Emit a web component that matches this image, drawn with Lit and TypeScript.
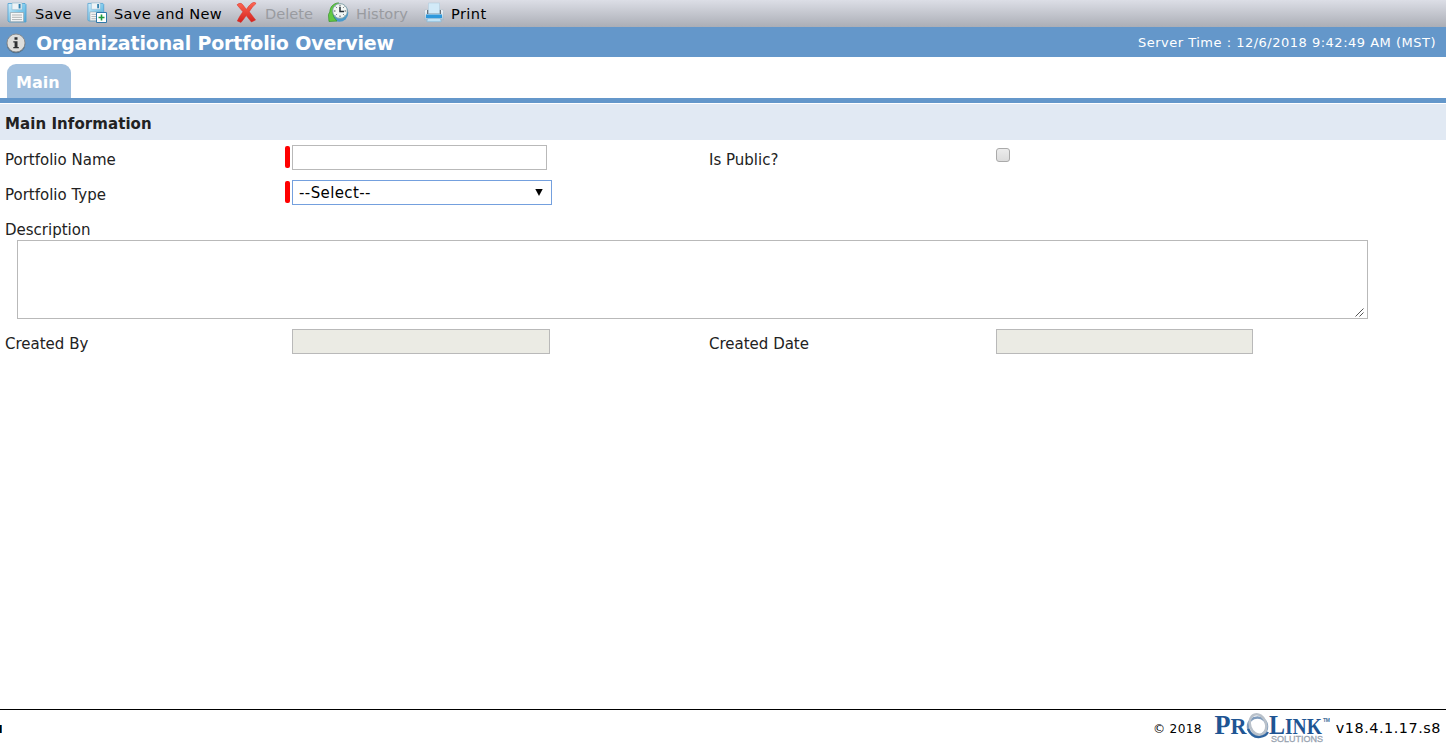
import { LitElement, html, css, svg } from "lit";
import { customElement } from "lit/decorators.js";

const floppy = svg`
  <path d="M1 1.5h17l1 1V20H2l-1-1z" fill="url(#disk)" stroke="#4b9fd0" stroke-width=".8"/>
  <path d="M5 1h10v6.7H5z" fill="#eef3f6" stroke="#8fb8cf" stroke-width=".6"/>
  <path d="M11.6 2h2v4.5h-2z" fill="#2f7fae"/>
  <path d="M3.4 10.5h13.2v9.2H3.4z" fill="#f7f7f7" stroke="#8b989f" stroke-width=".6"/>
  <path d="M5 13h10M5 15.3h10M5 17.6h10" stroke="#a6abae" stroke-width=".9"/>`;

const diskGradient = svg`<defs><linearGradient id="disk" x1="0" y1="0" x2="1" y2="1">
  <stop offset="0" stop-color="#d4effc"/><stop offset=".5" stop-color="#82cbed"/><stop offset="1" stop-color="#4fa9d8"/>
</linearGradient></defs>`;

const icons = {
  save: html`<svg width="20" height="21" viewBox="0 0 20 21">${diskGradient}${floppy}</svg>`,
  saveNew: html`<svg width="20" height="21" viewBox="0 0 20 21">${diskGradient}
    <g transform="scale(.88 .95)">${floppy}</g>
    <path d="M9.5 10.5h10v10h-10z" fill="#fff" stroke="#2f78aa"/>
    <path d="M14.5 12.5v6M11.5 15.5h6" stroke="#1e9a3c" stroke-width="1.6"/></svg>`,
  remove: html`<svg width="21" height="21" viewBox="0 0 21 21">
    <defs><linearGradient id="cross" x2="0" y2="1"><stop stop-color="#ff6a55"/><stop offset="1" stop-color="#d3211d"/></linearGradient></defs>
    <path d="M1 2.8C3 1 5.3.8 6.6 2.6l3.8 4.8C12.5 4.4 14.8 1 18.3 0l1.8 1.4c-2.7 2.3-5 5.2-6.8 8.4l6.3 8.2-4.2 2-5.2-6.4c-1.6 2.2-3.2 4.6-5.2 6.8L1.3 19c1.500-3.400 3.400-6.400 5.600-9.200z" fill="url(#cross)" stroke="#d62a23" stroke-width=".5"/></svg>`,
  history: html`<svg width="21" height="21" viewBox="0 0 21 21">
    <circle cx="11.3" cy="10.800" r="9" fill="#4b9acb"/>
    <path d="M10.500 .8C5 1.500 2 5 1.800 10L.4 12.500 1 19.500l8-.5-2.500-3C3.500 11 5 6 10.500 4z" fill="#62c843" stroke="#37952c" stroke-width=".7"/>
    <circle cx="12" cy="9" r="7.400" fill="#f3f7f5" stroke="#7c9ca4" stroke-width=".9"/>
    <path d="M12 2.800v1.700M12 13.500v1.700M5.800 9h1.700M16.500 9h1.700M7.700 4.700l1 1M16.300 4.700l-1 1M7.700 13.300l1-1M16.300 13.300l-1-1" stroke="#4e5a5e"/>
    <path d="M12 5v4.500h4" fill="none" stroke="#263138" stroke-width="1.500"/></svg>`,
  print: html`<svg width="20" height="21" viewBox="0 0 20 21">
    <defs><linearGradient id="printer" x2="0" y2="1"><stop stop-color="#f7f8f9"/><stop offset=".5" stop-color="#d3dfe8"/><stop offset="1" stop-color="#9fbdd3"/></linearGradient></defs>
    <path d="M.5 9.2Q.5 7.500 2 7.500h16q1.500 0 1.500 1.700V18H.5z" fill="url(#printer)" stroke="#a5b4c0" stroke-width=".5"/>
    <path d="M3 8h14v4H3z" fill="#65717c"/>
    <path d="M4.500 1h11v10.500h-11z" fill="#d2eaf8" stroke="#b4cddd" stroke-width=".6"/>
    <path d="M2 12.500h16V16H2z" fill="#2d98dc"/>
    <path d="M3.600 16.500h12.800l.8 3.200H2.800z" fill="#bfe3f7" stroke="#82b5d5" stroke-width=".6"/></svg>`,
  info: html`<svg width="20" height="21" viewBox="0 0 20 21">
    <circle cx="10" cy="11" r="9.3" fill="#4c708f"/>
    <circle cx="10" cy="10" r="9" fill="#dededc" stroke="#888" stroke-width=".9"/>
    <path d="M8.5 4.2h3v2.5h-3zM7.3 8.2h4.2v5.7h1.3v1.4H7.3v-1.4h1.3V9.6H7.3z" fill="#2e3032"/></svg>`,
};

@customElement("app-root")
export class AppRoot extends LitElement {
  static styles = css`
    :host { display: flex; flex-direction: column; height: 744px; background: #fff; color: #222;
      font: 15px/18px Verdana, "DejaVu Sans", sans-serif; overflow: hidden; white-space: nowrap; }
    * { box-sizing: border-box; }
    svg { display: block; flex: none; }
    .toolbar { display: flex; flex: none; height: 27px; padding-left: 7px; background: linear-gradient(#dcdee6, #abaeb6); }
    .tool { display: flex; gap: 8px; color: #000; padding-top: 2px; font-size: 14.6px; }
    .tool span { padding-top: 3px; }
    .save { width: 80px; letter-spacing: .25px; }
    .save-new { width: 149px; gap: 7px; letter-spacing: .3px; }
    .delete { width: 92px; color: #999ba0; }
    .history { width: 96px; gap: 7px; color: #999ba0; }
    .print { gap: 7px; letter-spacing: .4px; }
    .titlebar { display: flex; flex: none; height: 30px; padding: 6px 10px 0 6px; color: #fff; background: #6497ca; }
    .title { flex: 1; margin: 1px 0 0 10px; font-size: 19px; font-weight: bold; letter-spacing: -.17px; }
    .clock { margin-top: 1px; font-size: 13px; letter-spacing: .5px; }
    .tabs { display: flex; flex: none; height: 46px; padding: 7px 0 0 7px; border-bottom: 5px solid #6497ca; }
    .tab { width: 64px; height: 34px; border-radius: 9px 9px 0 0; background: #a0bfde; color: #fff; padding: 10px 0 0 9px; font-weight: bold; font-size: 16px; }
    .section { flex: none; height: 36px; margin: 1px 0 0; padding: 11px 5px; background: #e1e9f3; font-size: 15px; font-weight: bold; letter-spacing: .07px; }
    .row { display: grid; grid-template-columns: 280px 424px 287px 1fr; height: 35px; padding-left: 5px; align-items: start; }
    .label { padding-top: 11px; }
    .field { display: flex; gap: 2px; padding-top: 5px; }
    .plain { padding-left: 7px; }
    .required { width: 5px; height: 22px; margin-top: 1px; border-radius: 2px; background: red; }
    .input { width: 255px; height: 25px; border: 1px solid #b9b9b9; background: #fff; }
    .select { display: flex; justify-content: space-between; width: 260px; height: 25px; padding: 3px 8px 0 6px; border: 1px solid #74a0de; color: #000; font-size: 15px; letter-spacing: .4px; }
    .arrow { margin-top: 5px; }
    .readonly { width: 258px; background: #ebebe4; }
    .date { width: 257px; }
    .check { width: 14px; height: 14px; margin-top: 8px; border: 1px solid #aaa; border-radius: 3px; background: linear-gradient(#ececec, #dcdcdc); }
    .description { height: 114px; padding-left: 5px; }
    .area { display: flex; align-items: end; justify-content: end; width: 1351px; height: 79px; margin: 1px 0 0 12px; padding: 1px 3px; border: 1px solid #b9b9b9; }
    .footer { display: flex; flex: none; height: 35px; margin-top: auto; padding: 0 5px 0 0; border-top: 1px solid #000; color: #000; font-size: 14px; }
    .edge { width: 2px; height: 8px; margin-top: 15px; background: linear-gradient(90deg, #000 50%, #0a5c9c 50%); }
    .copyright { margin: 10px 11px 0 auto; font-size: 12.2px; letter-spacing: .3px; }
    .version { margin: 9px 0 0 6px; font-size: 14.4px; letter-spacing: .52px; }
  `;

  render() {
    return html`
      <div class="toolbar">
        <div class="tool save">${icons.save}<span>Save</span></div>
        <div class="tool save-new">${icons.saveNew}<span>Save and New</span></div>
        <div class="tool delete">${icons.remove}<span>Delete</span></div>
        <div class="tool history">${icons.history}<span>History</span></div>
        <div class="tool print">${icons.print}<span>Print</span></div>
      </div>
      <div class="titlebar">${icons.info}<div class="title"><span>Organizational Portfolio Overview</span></div><div class="clock">Server Time : 12/6/2018 9:42:49 AM (MST)</div></div>
      <div class="tabs"><div class="tab">Main</div></div>
      <div class="section">Main Information</div>
      <div class="row">
        <div class="label">Portfolio Name</div>
        <div class="field"><i class="required"></i><div class="input"></div></div>
        <div class="label">Is Public?</div><div class="check"></div>
      </div>
      <div class="row">
        <div class="label">Portfolio Type</div>
        <div class="field"><i class="required"></i><div class="select"><span>--Select--</span>
          <svg class="arrow" width="8" height="7"><path d="M.3 0h7.4L4 7z" fill="#000"/></svg></div></div>
      </div>
      <div class="description">
        <div class="label">Description</div>
        <div class="area"><svg width="9" height="9"><path d="M.5 8.5l8-8M4.5 8.5l4-4" fill="none" stroke="#555"/></svg></div>
      </div>
      <div class="row">
        <div class="label">Created By</div>
        <div class="field plain"><div class="input readonly"></div></div>
        <div class="label">Created Date</div>
        <div class="field"><div class="input readonly date"></div></div>
      </div>
      <div class="footer">
        <div class="edge"></div>
        <div class="copyright">© 2018</div>
        <svg width="117" height="34" viewBox="1213 710 117 34">
          <g fill="#1f5593" font-family="Liberation Serif, serif" font-weight="bold">
            <text x="1214.5" y="734" font-size="26.5" textLength="16" lengthAdjust="spacingAndGlyphs">P</text>
            <text x="1230.5" y="734" font-size="23" textLength="16" lengthAdjust="spacingAndGlyphs">R</text>
            <text x="1269" y="734" font-size="26.5" textLength="16" lengthAdjust="spacingAndGlyphs">L</text>
            <text x="1285" y="734" font-size="23" textLength="37" lengthAdjust="spacingAndGlyphs">INK</text>
          </g>
          <ellipse cx="1257.5" cy="726.5" rx="9.5" ry="9" fill="none" stroke="#7f9cbd" stroke-width="2.5"/>
          <ellipse cx="1258" cy="724.5" rx="8" ry="10.5" fill="none" stroke="#b9c1ca" stroke-width="2.5" transform="rotate(-20 1258 724.5)"/>
          <path d="M1248 729q4 9 12 8 6-1 8-5" fill="none" stroke="#2f649f" stroke-width="2.2"/>
          <text x="1271" y="742" font-family="Liberation Sans, sans-serif" font-size="9.5" fill="#98a3b0" stroke="#98a3b0" stroke-width=".3" textLength="52" lengthAdjust="spacingAndGlyphs">SOLUTIONS</text>
          <text x="1323" y="722" font-family="Liberation Sans, sans-serif" font-size="5" font-weight="bold" fill="#427098" textLength="7">TM</text>
        </svg>
        <div class="version">v18.4.1.17.s8</div>
      </div>`;
  }
}
